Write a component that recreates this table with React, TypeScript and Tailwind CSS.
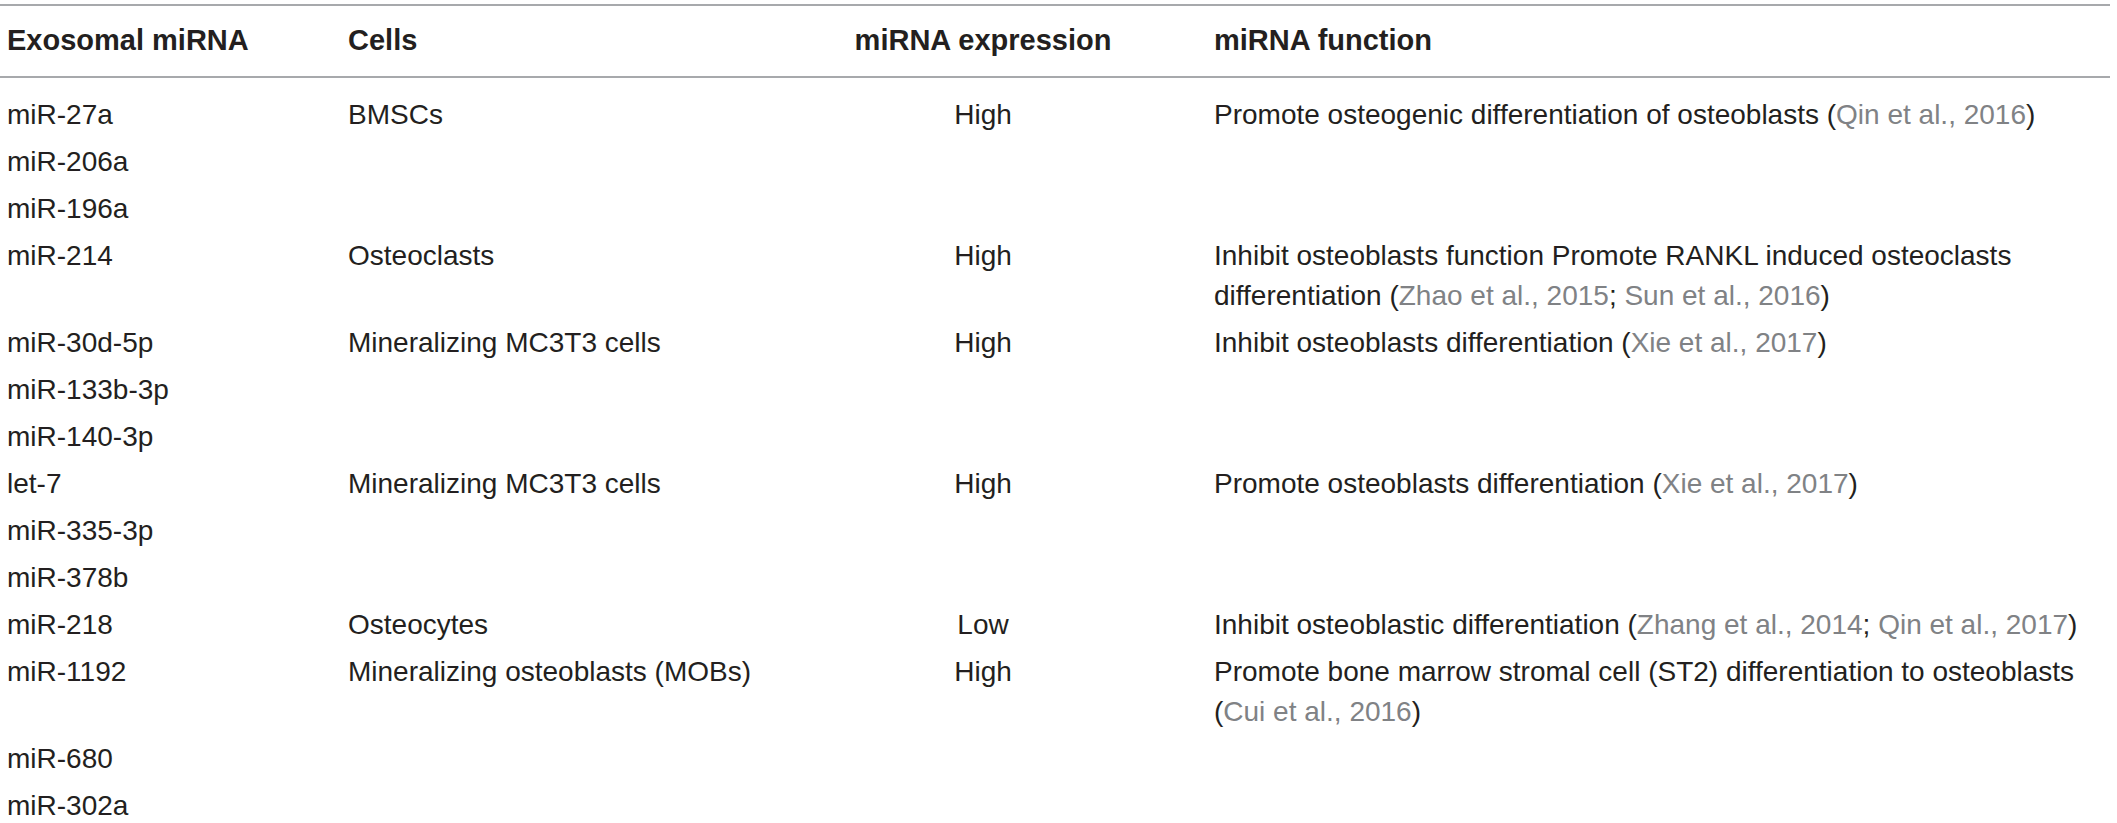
import React from "react";

type Row = {
  mirna: string;
  cells?: string;
  expr?: string;
  fn?: React.ReactNode[];
};

const Cite = ({ children }: { children: React.ReactNode }) => (
  <span className="text-[#808285]">{children}</span>
);

const rows: Row[] = [
  {
    mirna: "miR-27a",
    cells: "BMSCs",
    expr: "High",
    fn: [
      <>
        Promote osteogenic differentiation of osteoblasts (<Cite>Qin et al., 2016</Cite>)
      </>,
    ],
  },
  { mirna: "miR-206a" },
  { mirna: "miR-196a" },
  {
    mirna: "miR-214",
    cells: "Osteoclasts",
    expr: "High",
    fn: [
      <>Inhibit osteoblasts function Promote RANKL induced osteoclasts</>,
      <>
        differentiation (<Cite>Zhao et al., 2015</Cite>; <Cite>Sun et al., 2016</Cite>)
      </>,
    ],
  },
  {
    mirna: "miR-30d-5p",
    cells: "Mineralizing MC3T3 cells",
    expr: "High",
    fn: [
      <>
        Inhibit osteoblasts differentiation (<Cite>Xie et al., 2017</Cite>)
      </>,
    ],
  },
  { mirna: "miR-133b-3p" },
  { mirna: "miR-140-3p" },
  {
    mirna: "let-7",
    cells: "Mineralizing MC3T3 cells",
    expr: "High",
    fn: [
      <>
        Promote osteoblasts differentiation (<Cite>Xie et al., 2017</Cite>)
      </>,
    ],
  },
  { mirna: "miR-335-3p" },
  { mirna: "miR-378b" },
  {
    mirna: "miR-218",
    cells: "Osteocytes",
    expr: "Low",
    fn: [
      <>
        Inhibit osteoblastic differentiation (<Cite>Zhang et al., 2014</Cite>; <Cite>Qin et al., 2017</Cite>)
      </>,
    ],
  },
  {
    mirna: "miR-1192",
    cells: "Mineralizing osteoblasts (MOBs)",
    expr: "High",
    fn: [
      <>Promote bone marrow stromal cell (ST2) differentiation to osteoblasts</>,
      <>
        (<Cite>Cui et al., 2016</Cite>)
      </>,
    ],
  },
  { mirna: "miR-680" },
  { mirna: "miR-302a" },
];

const grid = "grid grid-cols-[348px_490px_290px_1fr] w-[2110px]";

export default function App() {
  return (
    <div
      className="bg-white w-[2117px] h-[823px] overflow-hidden pt-[4px] text-[#231f20] text-[28px]"
      style={{ fontFamily: '"Liberation Sans", Arial, sans-serif' }}
    >
      <div className={`${grid} border-y-2 border-[#a7a9ac] h-[74px] items-center font-bold text-[29px]`}>
        <div className="pl-[7px]">Exosomal miRNA</div>
        <div>Cells</div>
        <div className="text-center">miRNA expression</div>
        <div className="pl-[86px]">miRNA function</div>
      </div>
      <div className="pt-[13px]">
        {rows.map((r, i) => (
          <div key={i} className={`${grid} py-[3.5px] leading-[40px]`}>
            <div className="pl-[7px]">{r.mirna}</div>
            <div>{r.cells}</div>
            <div className="text-center">{r.expr}</div>
            <div className="pl-[86px]">
              {r.fn?.map((line, j) => (
                <div key={j} className="whitespace-nowrap">
                  {line}
                </div>
              ))}
            </div>
          </div>
        ))}
      </div>
    </div>
  );
}
